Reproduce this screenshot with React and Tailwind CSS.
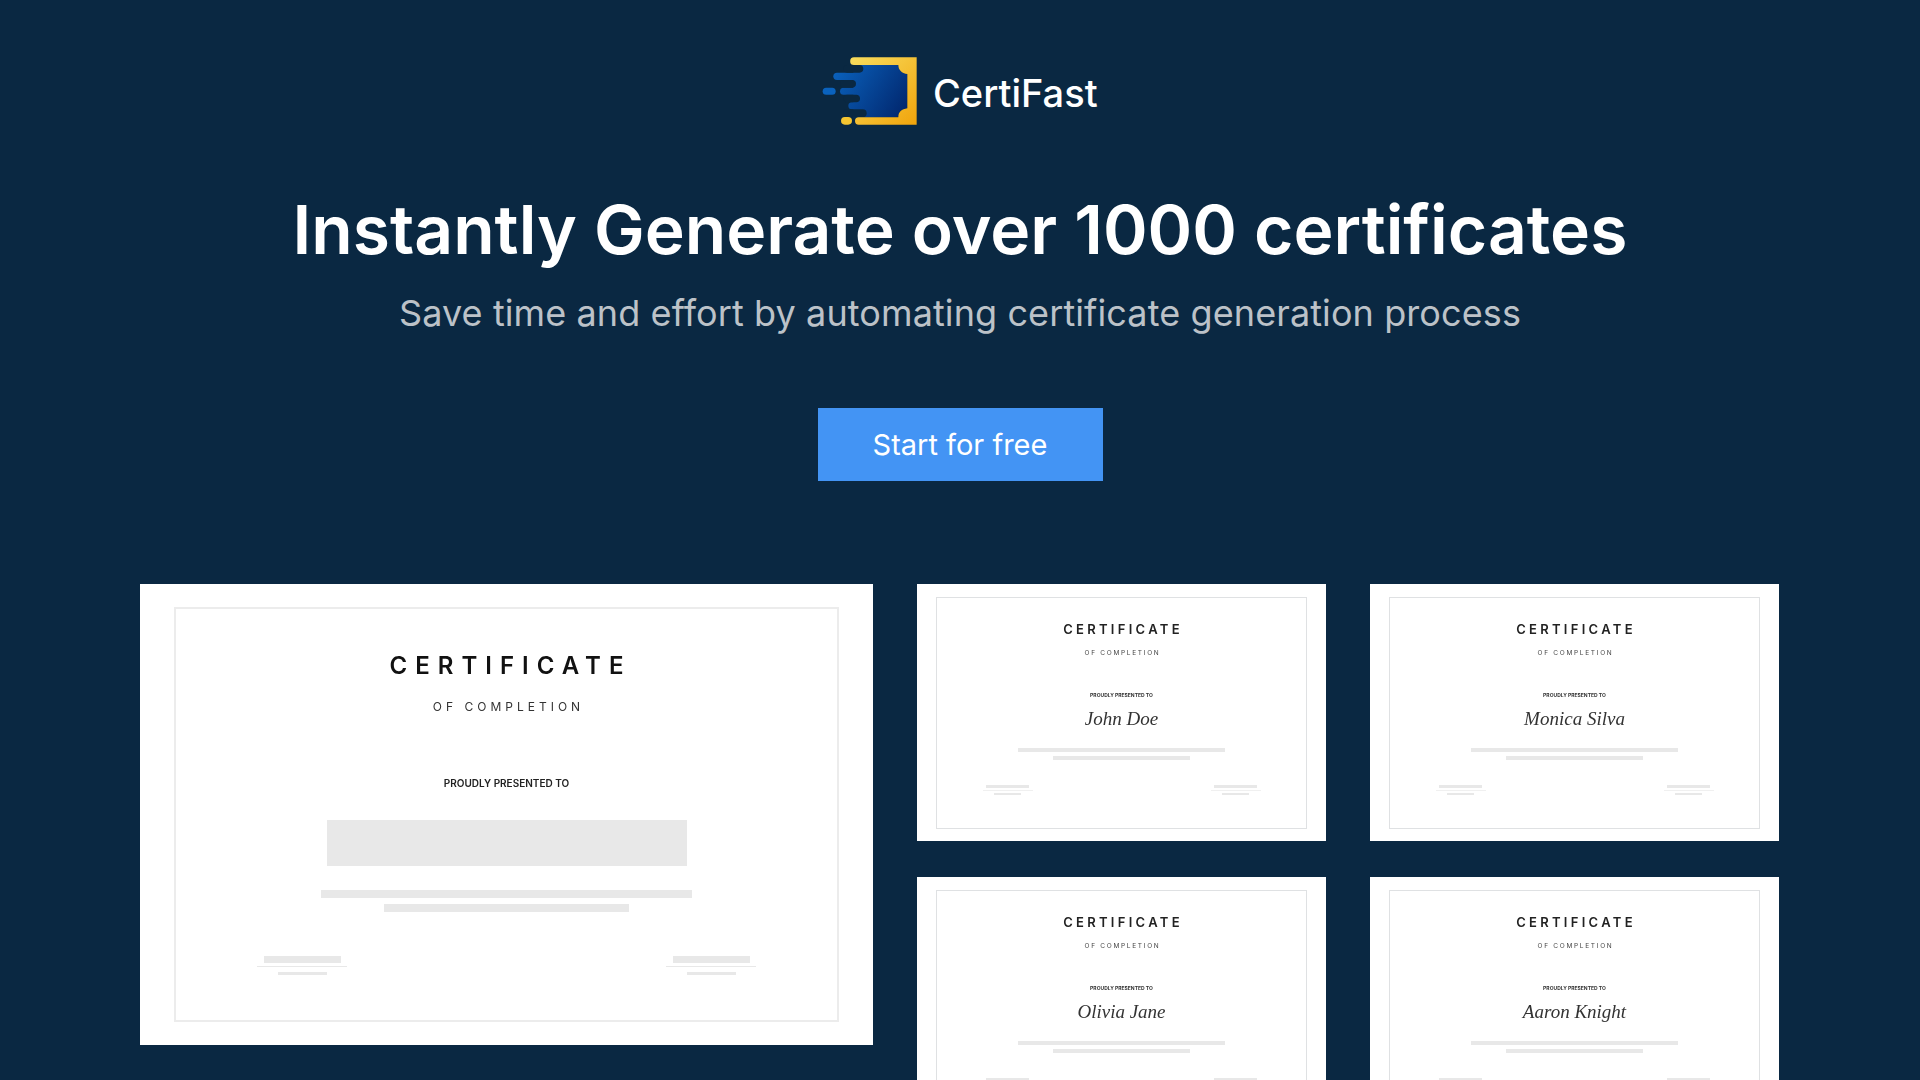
import React from 'react'

function Logo() {
  return (
    <svg width="120" height="85" viewBox="0 0 360 255" className="shrink-0">
      <defs>
        <linearGradient id="gold" gradientUnits="userSpaceOnUse" x1="130" y1="20" x2="325" y2="225">
          <stop offset="0" stopColor="#f9dc5c" />
          <stop offset="1" stopColor="#f0a30a" />
        </linearGradient>
        <linearGradient id="blue" gradientUnits="userSpaceOnUse" x1="70" y1="60" x2="292" y2="200">
          <stop offset="0" stopColor="#0a62bd" />
          <stop offset="1" stopColor="#01246a" />
        </linearGradient>
      </defs>
      <path d="M130 45H265C265 60 275 70 292 72V175C275 178 265 185 265 202H130Z" fill="url(#blue)" />
      <rect x="70" y="68" width="100" height="22" rx="11" fill="url(#blue)" />
      <rect x="90" y="113" width="100" height="21" rx="10.5" fill="url(#blue)" />
      <rect x="115" y="157" width="80" height="21" rx="10.5" fill="url(#blue)" />
      <rect x="38" y="113" width="39" height="21" rx="10.5" fill="#0a62bd" />
      <rect x="100" y="45" width="60" height="23" rx="11.5" fill="#0a2842" />
      <rect x="90" y="90" width="48" height="23" rx="11.5" fill="#0a2842" />
      <rect x="100" y="134" width="50" height="23" rx="11.5" fill="#0a2842" />
      <rect x="100" y="178" width="70" height="24" rx="12" fill="#0a2842" />
      <path d="M132 22H320V224H146A11 11 0 0 1 146 202H265C265 185 275 178 292 175V72C275 70 265 60 265 45H132A11.5 11.5 0 0 1 132 22Z" fill="url(#gold)" />
      <rect x="93" y="201" width="33" height="23" rx="11.5" fill="#f5c531" />
    </svg>
  )
}

function BigCertificate() {
  return (
    <div className="w-[733px] h-[461px] shrink-0 bg-white px-[34px] py-[23px]">
      <div className="h-full flex flex-col items-center border-2 border-[#ececec] pt-[45px] font-['Inter',sans-serif] blur-[0.3px]">
        <p className="text-[24px] leading-[24px] font-semibold tracking-[8px] text-[#111] pl-[8px]">CERTIFICATE</p>
        <p className="mt-[22px] text-[12px] leading-[14px] tracking-[4px] text-[#333] pl-[4px]">OF COMPLETION</p>
        <p className="mt-[64px] text-[10px] leading-[10px] font-semibold text-[#222]">PROUDLY PRESENTED TO</p>
        <div className="mt-[32px] w-[360px] h-[46px] bg-[#e8e8e8]" />
        <div className="mt-[24px] w-[371px] h-[8px] bg-[#e8e8e8]" />
        <div className="mt-[6px] w-[245px] h-[8px] bg-[#e8e8e8]" />
        <div className="mt-[44px] w-[499px] flex justify-between">
          {[0, 1].map((i) => (
            <div key={i} className="w-[90px] flex flex-col items-center">
              <div className="w-[77px] h-[7px] bg-[#e8e8e8]" />
              <div className="mt-[3px] w-full h-px bg-[#e8e8e8]" />
              <div className="mt-[5px] w-[49px] h-[3px] bg-[#e8e8e8]" />
            </div>
          ))}
        </div>
      </div>
    </div>
  )
}

function SmallCertificate({ name }) {
  return (
    <div className="h-[257px] bg-white px-[19px] py-[13px] overflow-hidden">
      <div className="h-[232px] flex flex-col items-center border-[1.5px] border-[#dfe1e3] pt-[25px] font-['Inter',sans-serif] blur-[0.4px]">
        <p className="text-[13px] leading-[13px] font-semibold tracking-[3.3px] text-[#222] pl-[3px]">CERTIFICATE</p>
        <p className="mt-[13px] text-[6.5px] leading-[8px] tracking-[1.7px] text-[#444] pl-[2px]">OF COMPLETION</p>
        <p className="mt-[35px] text-[5px] leading-[6px] font-bold text-[#333]">PROUDLY PRESENTED TO</p>
        <p className="mt-[9px] font-['Liberation_Serif',serif] italic text-[19px] leading-[24px] text-[#333]">{name}</p>
        <div className="mt-[17px] w-[207px] h-[4px] bg-[#e8e8e8]" />
        <div className="mt-[4px] w-[137px] h-[4px] bg-[#e8e8e8]" />
        <div className="mt-[25px] w-[278px] flex justify-between">
          {[0, 1].map((i) => (
            <div key={i} className="w-[50px] flex flex-col items-center">
              <div className="w-[43px] h-[3px] bg-[#e8e8e8]" />
              <div className="mt-[2px] w-full h-px bg-[#f0f0f0]" />
              <div className="mt-[2px] w-[27px] h-[2px] bg-[#e8e8e8]" />
            </div>
          ))}
        </div>
      </div>
    </div>
  )
}

export default function App() {
  return (
    <div className="h-screen overflow-hidden bg-[#0a2842] font-['Inter',sans-serif] flex flex-col items-center pt-[50px]">
      <div className="flex items-center w-[300px] shrink-0">
        <Logo />
        <span className="ml-[3px] text-[38px] font-medium leading-[42px] text-white">CertiFast</span>
      </div>
      <h1 className="mt-[53px] text-[67.75px] leading-[82px] font-semibold text-white shrink-0">Instantly Generate over 1000 certificates</h1>
      <p className="mt-[21px] text-[36px] leading-[44px] tracking-[0.1px] text-[#bcc2c8] shrink-0">Save time and effort by automating certificate generation process</p>
      <button className="mt-[73px] w-[285px] h-[73px] shrink-0 bg-[#4394f4] text-white text-[29px]">Start for free</button>
      <div className="mt-[103px] w-full pl-[140px] flex gap-[44px] items-start shrink-0">
        <BigCertificate />
        <div className="grid grid-cols-[409px_409px] gap-x-[44px] gap-y-[36px]">
          <SmallCertificate name="John Doe" />
          <SmallCertificate name="Monica Silva" />
          <SmallCertificate name="Olivia Jane" />
          <SmallCertificate name="Aaron Knight" />
        </div>
      </div>
    </div>
  )
}
